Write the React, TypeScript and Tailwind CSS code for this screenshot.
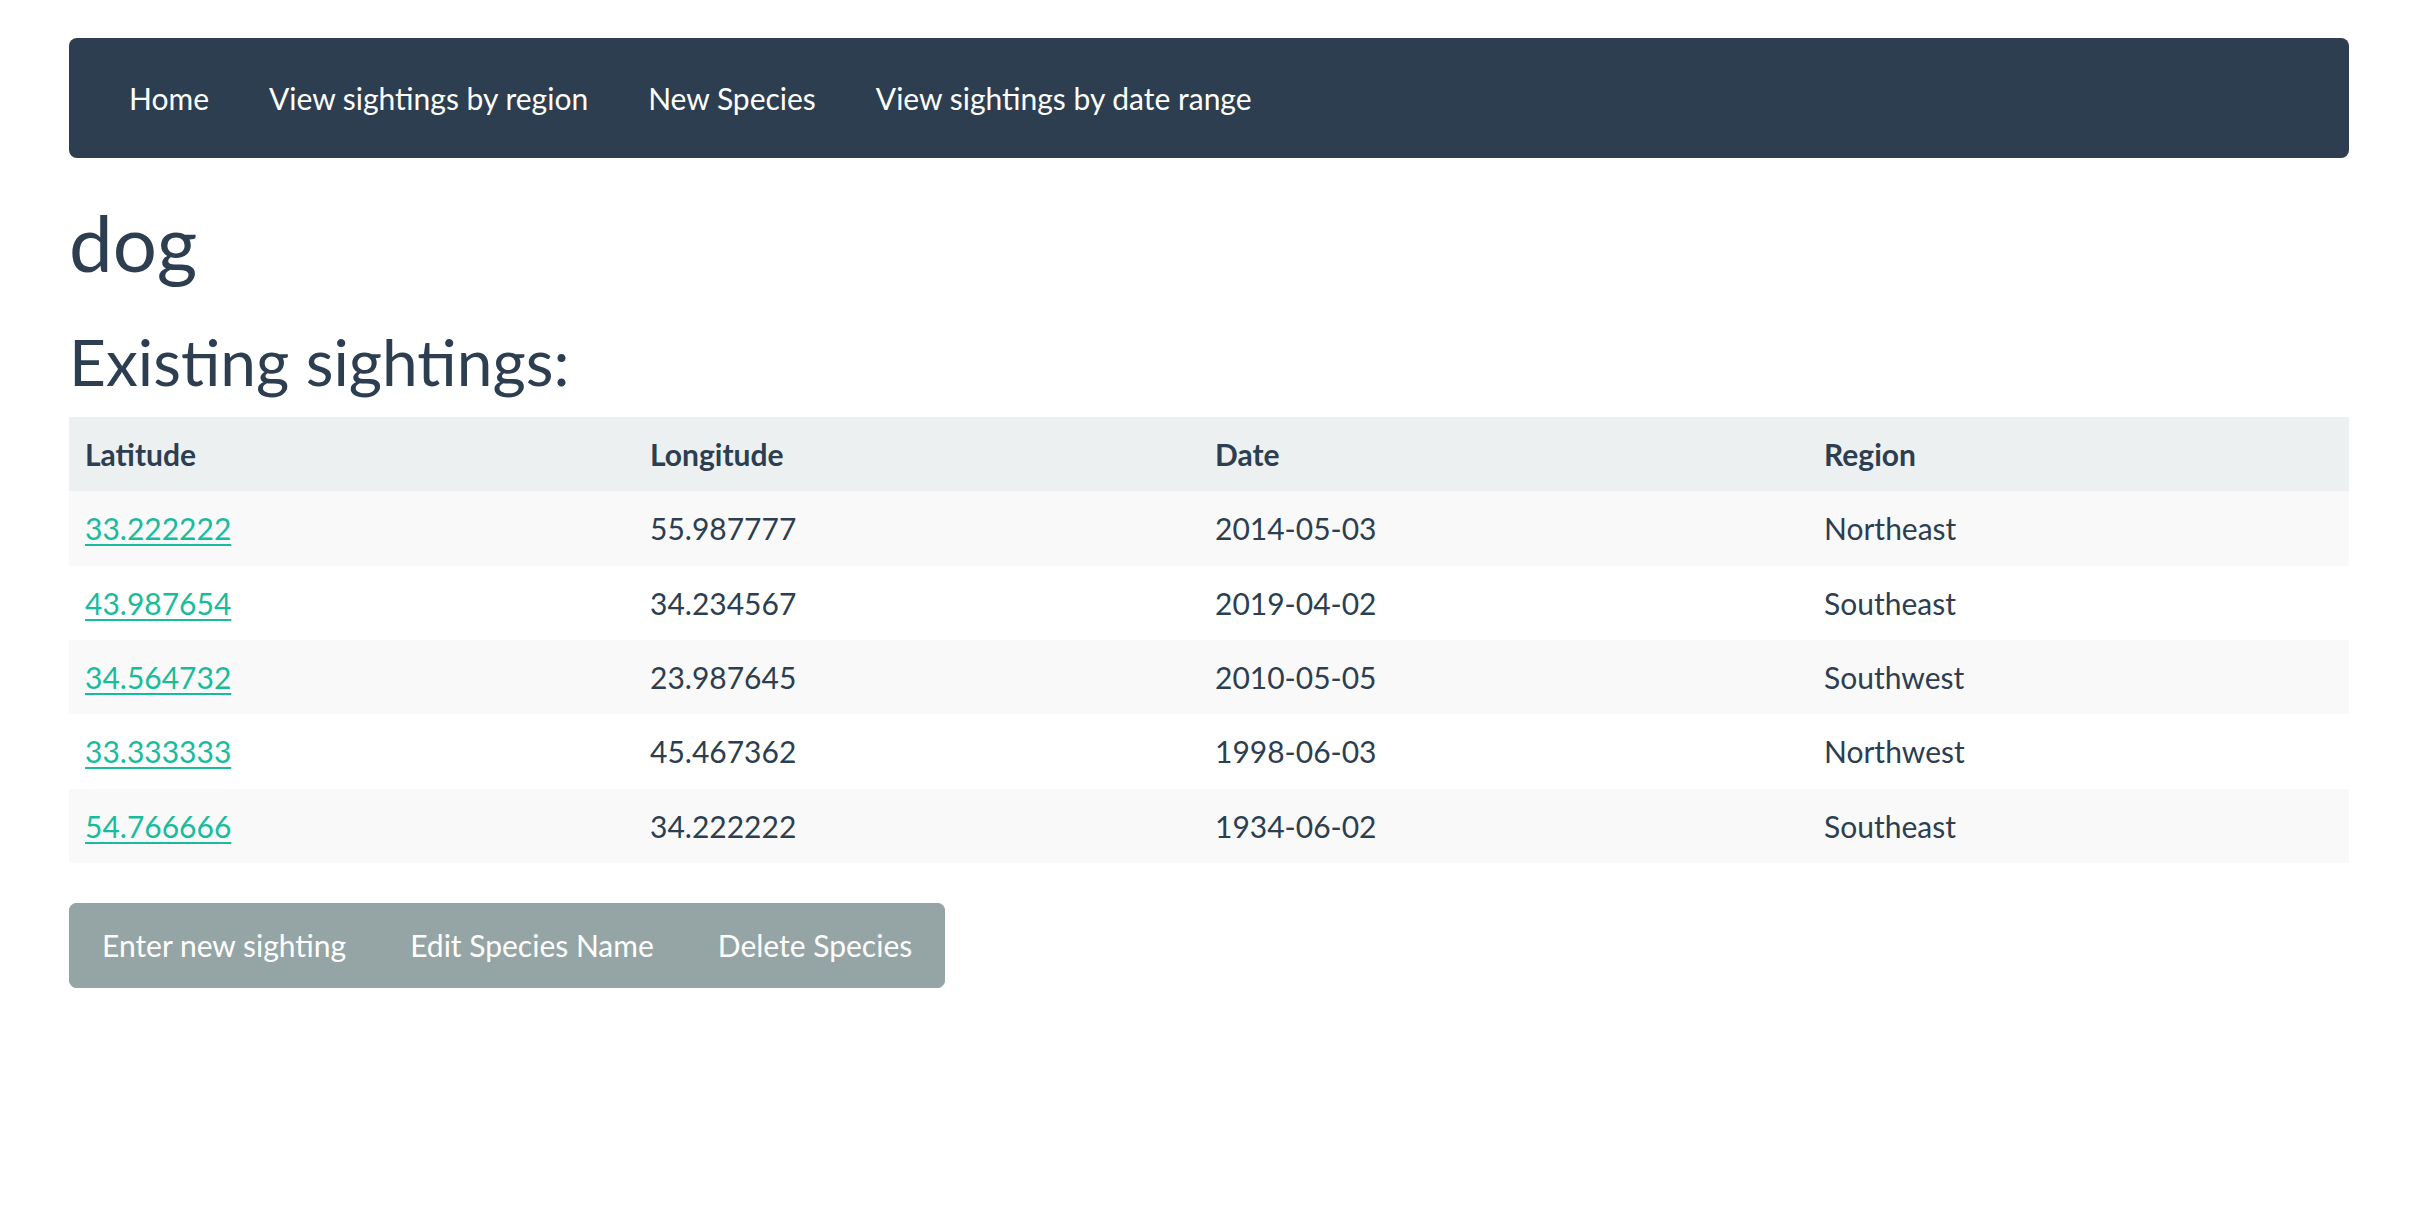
const sightings = [
  { lat: '33.222222', lng: '55.987777', date: '2014-05-03', region: 'Northeast' },
  { lat: '43.987654', lng: '34.234567', date: '2019-04-02', region: 'Southeast' },
  { lat: '34.564732', lng: '23.987645', date: '2010-05-05', region: 'Southwest' },
  { lat: '33.333333', lng: '45.467362', date: '1998-06-03', region: 'Northwest' },
  { lat: '54.766666', lng: '34.222222', date: '1934-06-02', region: 'Southeast' },
];

const navLinks = ['Home', 'View sightings by region', 'New Species', 'View sightings by date range'];

export default function App() {
  return (
    <div className="min-h-screen bg-white text-[30px] leading-[1.42857] text-[#2c3e50] [font-family:Lato,'Liberation_Sans',sans-serif]">
      <div className="mx-auto w-[2340px] px-[30px] pt-[38px]">
        {/* Navbar */}
        <nav className="mb-[40px] flex h-[120px] items-center rounded-[8px] bg-[#2c3e50] px-[30px]">
          <ul className="flex">
            {navLinks.map((label) => (
              <li key={label}>
                <a href="#" className="block px-[30px] py-[39px] leading-[42px] text-white">
                  {label}
                </a>
              </li>
            ))}
          </ul>
        </nav>

        <h1 className="mt-[42px] mb-[20px] text-[78px] leading-[1.1] font-normal">dog</h1>
        <h2 className="mt-[41px] mb-[20px] text-[64px] leading-[1.1] font-normal">Existing sightings:</h2>

        {/* Sightings table */}
        <table className="mb-[40px] w-full border-collapse">
          <thead>
            <tr className="bg-[#ecf0f1]">
              <th className="w-[565px] p-[16px] text-left leading-[42px] font-bold">Latitude</th>
              <th className="w-[565px] p-[16px] text-left leading-[42px] font-bold">Longitude</th>
              <th className="w-[609px] p-[16px] text-left leading-[42px] font-bold">Date</th>
              <th className="p-[16px] text-left leading-[42px] font-bold">Region</th>
            </tr>
          </thead>
          <tbody>
            {sightings.map((s, i) => (
              <tr key={s.lat} className={i % 2 === 0 ? 'bg-[#f9f9f9]' : 'bg-white'}>
                <td className="p-[16px] leading-[42.4px]">
                  <a href="#" className="text-[#18bc9c] underline decoration-[2px] underline-offset-[4px]">
                    {s.lat}
                  </a>
                </td>
                <td className="p-[16px] leading-[42.4px]">{s.lng}</td>
                <td className="p-[16px] leading-[42.4px]">{s.date}</td>
                <td className="p-[16px] leading-[42.4px]">{s.region}</td>
              </tr>
            ))}
          </tbody>
        </table>

        {/* Action buttons */}
        <div className="inline-flex overflow-hidden rounded-[8px] bg-[#95a5a6]">
          <button className="border-2 border-[#95a5a6] px-[31px] py-[20px] leading-[41px] text-white">Enter new sighting</button>
          <button className="-ml-[2px] border-2 border-[#95a5a6] px-[31px] py-[20px] leading-[41px] text-white">Edit Species Name</button>
          <button className="-ml-[2px] border-2 border-[#95a5a6] px-[31px] py-[20px] leading-[41px] text-white">Delete Species</button>
        </div>
      </div>
    </div>
  );
}
